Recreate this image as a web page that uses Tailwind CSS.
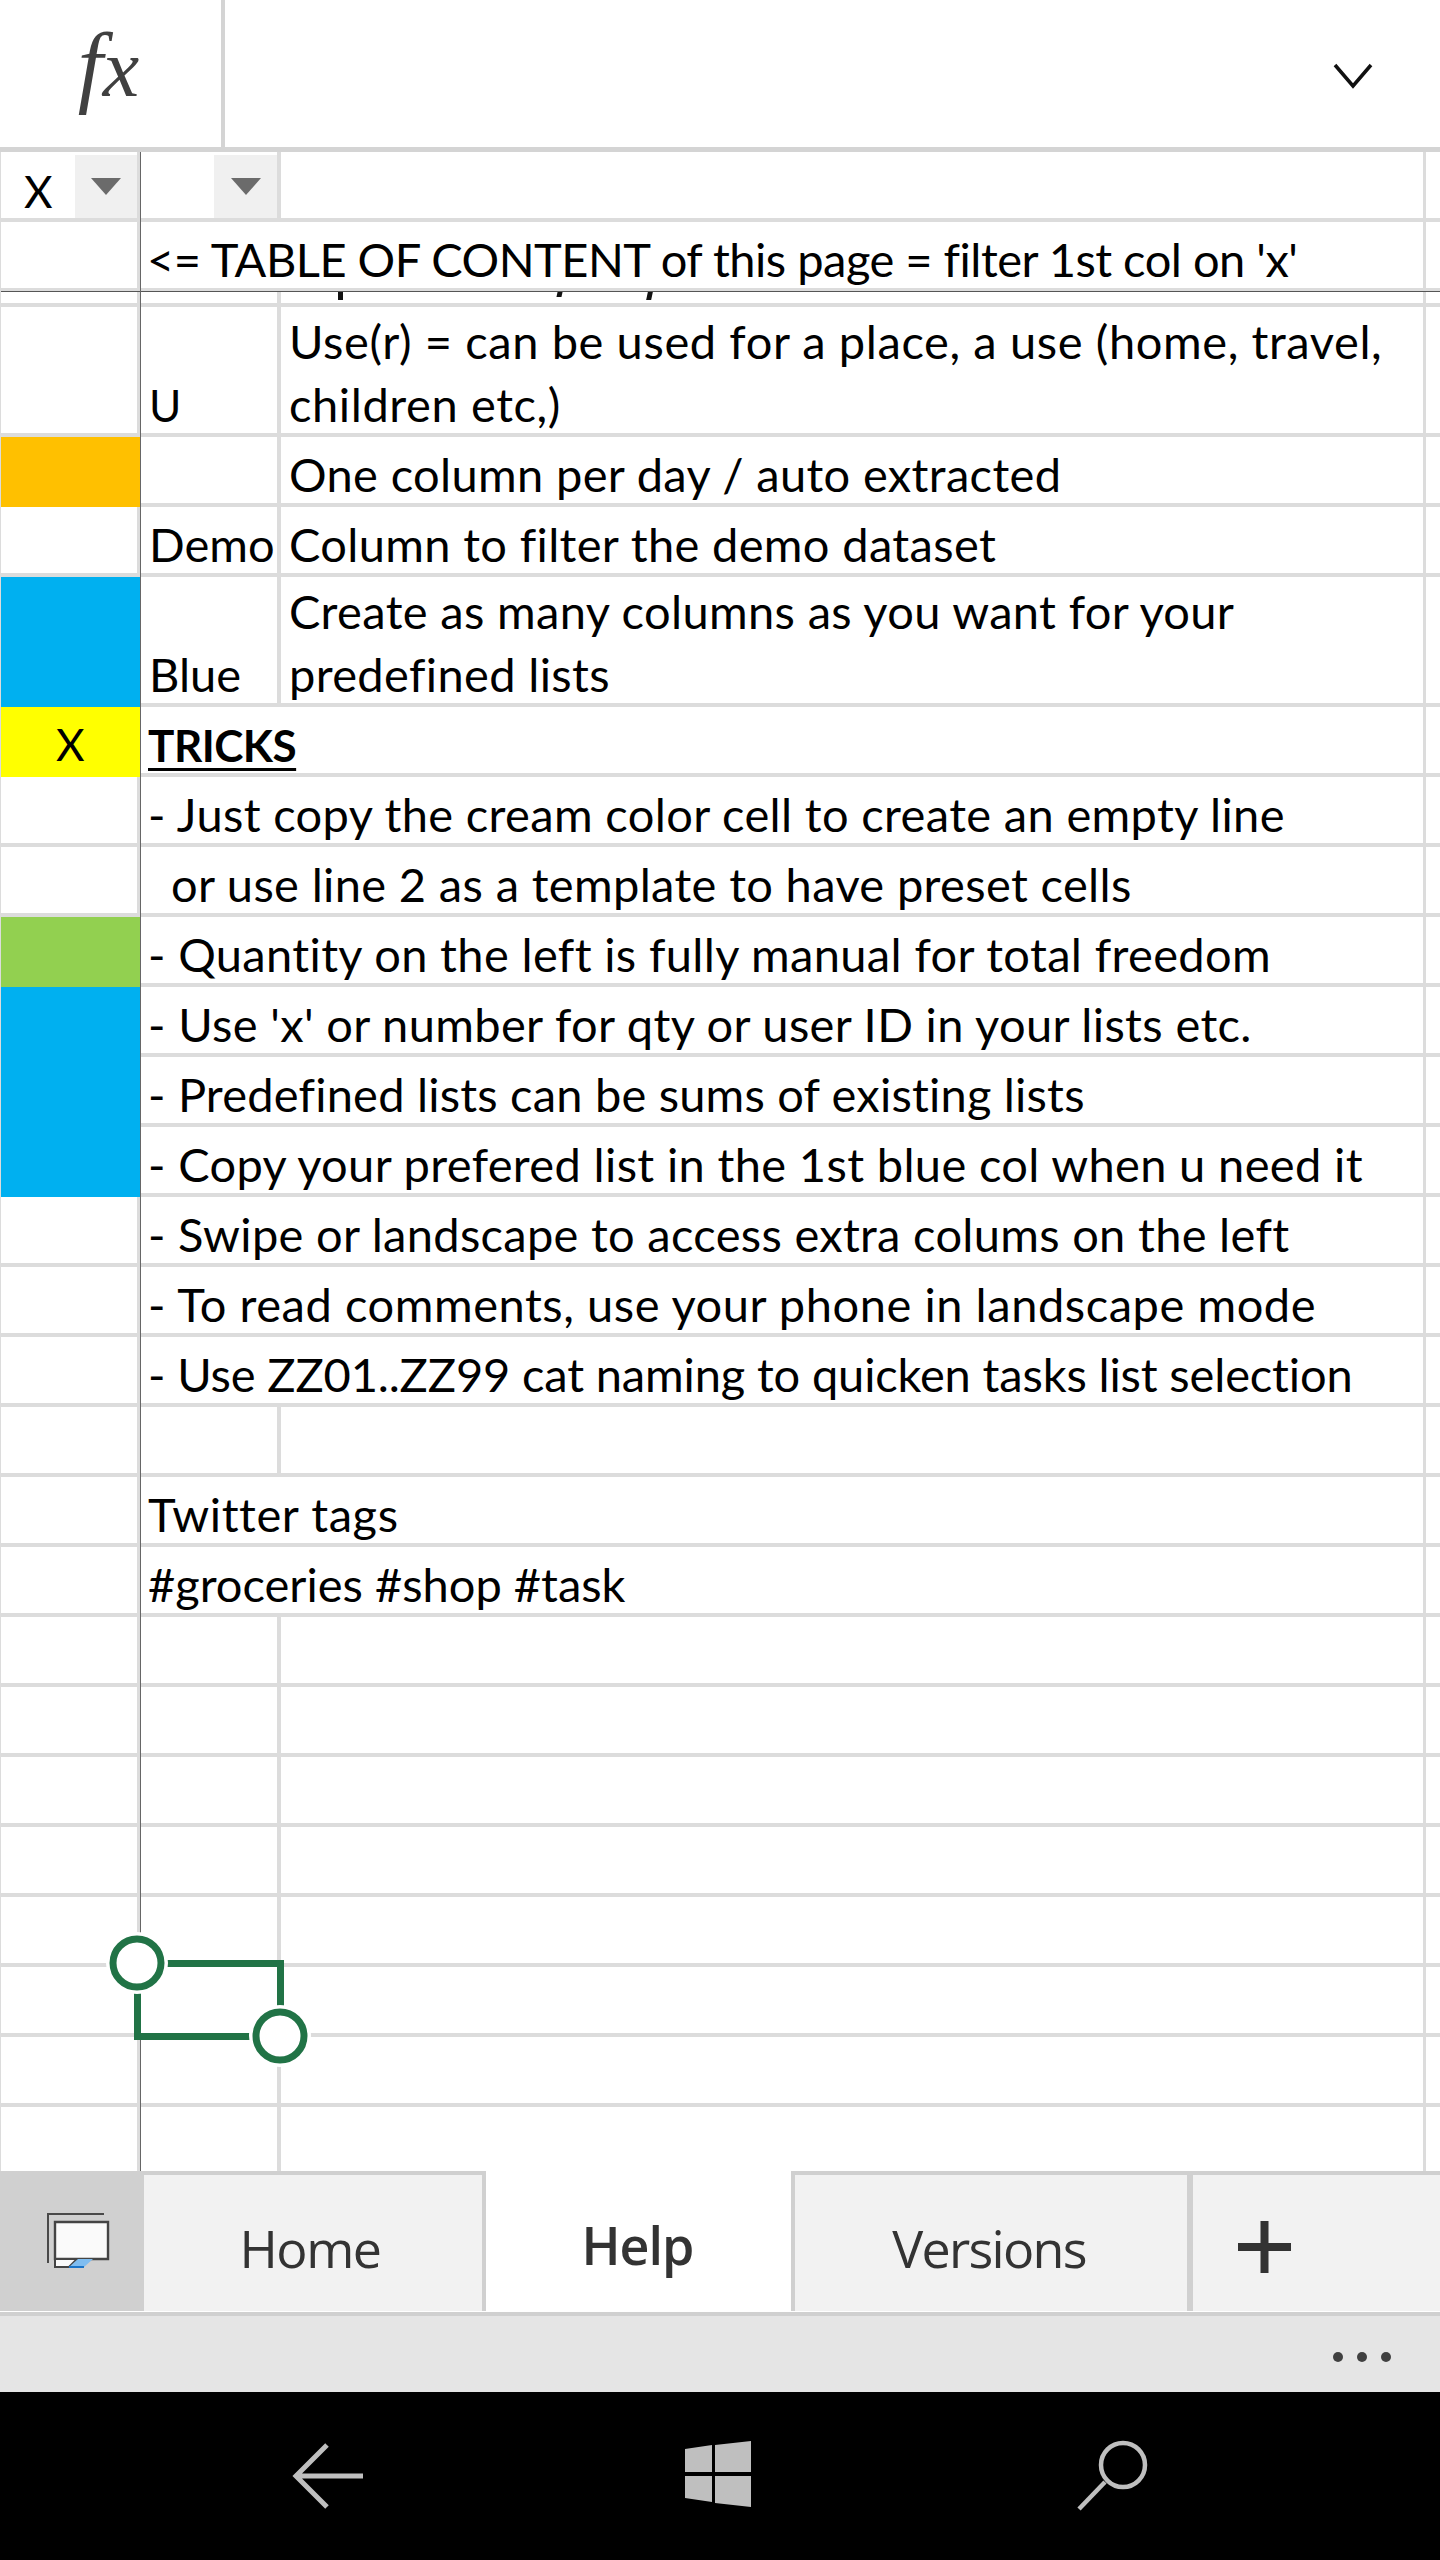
<!DOCTYPE html>
<html lang="en">
<head>
    <meta charset="UTF-8">
    <title>Excel Mobile - Help sheet</title>
    <script src="https://cdn.jsdelivr.net/npm/@tailwindcss/browser@4"></script>
</head>
<body class="bg-white">
<div class="relative w-[1440px] h-[2560px] overflow-hidden font-[Lato] text-[47px] leading-[63px] tracking-[0.35px] text-black whitespace-nowrap">

    <!-- formula bar -->
    <div class="flex h-[152px] border-b-[5px] border-[#d4d4d4]">
        <div class="w-[225px] border-r-4 border-[#d4d4d4] flex items-center justify-center pb-[16px] pr-[4px]">
            <p class="font-['Liberation_Serif'] italic text-[90px] leading-none tracking-normal text-[#404040]">f<span class="text-[82px]">x</span></p>
        </div>
        <div class="flex-1 flex justify-end pr-[67px] pt-[62px]">
            <svg class="w-[40px] h-[28px]" viewBox="0 0 40 28" fill="none" stroke="#111" stroke-width="3.5"><path d="M2 3l18 21L38 3"/></svg>
        </div>
    </div>

    <!-- sheet -->
    <div class="h-[2019px] overflow-hidden border-l border-[#dcdcdc]">
        <div class="flex h-[70px]">
            <div class="w-[139px] border-r-[3px] border-b-4 border-[#dcdcdc] flex items-start justify-between pt-[3px] pl-[23px]">
                <span class="text-[44px] mt-[5px]">X</span>
                <div class="w-[62px] h-[63px] bg-[#f0f0f0] flex items-center justify-center">
                    <svg class="w-[30px] h-[17px]" viewBox="0 0 30 17"><path d="M0 0h30L15 17z" fill="#6b6b6b"/></svg>
                </div>
            </div>
            <div class="w-[141px] border-r-4 border-b-4 border-[#dcdcdc] flex items-start justify-end pt-[3px]">
                <div class="w-[63px] h-[63px] bg-[#f0f0f0] flex items-center justify-center">
                    <svg class="w-[30px] h-[17px]" viewBox="0 0 30 17"><path d="M0 0h30L15 17z" fill="#6b6b6b"/></svg>
                </div>
            </div>
            <div class="w-[1145px] border-r-[3px] border-b-4 border-[#dcdcdc]"></div>
            <div class="flex-1 border-b-4 border-[#dcdcdc]"></div>
        </div>
        <div class="flex h-[69px]">
            <div class="w-[139px] border-r-[3px] border-b-[3px] border-[#dcdcdc]"></div>
            <div class="w-[1286px] pl-[7px] border-r-[3px] border-b-[3px] border-[#dcdcdc] flex items-end"><p class="-mb-[3px] tracking-[-0.5px]">&lt;= TABLE OF CONTENT of this page = filter 1st col on 'x'</p></div>
            <div class="flex-1 border-b-[3px] border-[#dcdcdc]"></div>
        </div>
        <div class="h-px bg-[#555555]"></div>
        <div class="flex h-[15px]">
            <div class="w-[139px] border-r-[3px] border-b-4 border-[#dcdcdc]"></div>
            <div class="w-[141px] border-r-4 border-b-4 border-[#dcdcdc]"></div>
            <div class="relative w-[1145px] border-r-[3px] border-b-4 border-[#dcdcdc]">
                <span class="absolute left-[57px] top-0 w-[5px] h-[8px] bg-[#111]"></span>
                <span class="absolute left-[276px] top-0 w-[5px] h-[5px] bg-[#111] -skew-x-12"></span>
                <span class="absolute left-[366px] top-0 w-[5px] h-[8px] bg-[#111] -skew-x-12"></span>
            </div>
            <div class="flex-1 border-b-4 border-[#dcdcdc]"></div>
        </div>
        <div class="flex h-[130px]">
            <div class="w-[139px] border-r-[3px] border-b-4 border-[#dcdcdc]"></div>
            <div class="w-[141px] pl-[9px] border-r-4 border-b-4 border-[#dcdcdc] flex items-end"><p class="-mb-[4px] text-[44px]">U</p></div>
            <div class="w-[1145px] pl-[8px] border-r-[3px] border-b-4 border-[#dcdcdc] flex items-end"><p class="-mb-[3px] tracking-[0.6px]">Use(r) = can be used for a place, a use (home, travel,<br>children etc,)</p></div>
            <div class="flex-1 border-b-4 border-[#dcdcdc]"></div>
        </div>
        <div class="flex h-[70px]">
            <div class="w-[139px] bg-[#ffc000]"></div>
            <div class="w-[141px] border-r-4 border-b-4 border-[#dcdcdc]"></div>
            <div class="w-[1145px] pl-[8px] border-r-[3px] border-b-4 border-[#dcdcdc] flex items-end"><p class="-mb-[3px]">One column per day / auto extracted</p></div>
            <div class="flex-1 border-b-4 border-[#dcdcdc]"></div>
        </div>
        <div class="flex h-[70px]">
            <div class="w-[139px] border-r-[3px] border-b-4 border-[#dcdcdc]"></div>
            <div class="w-[141px] pl-[9px] border-r-4 border-b-4 border-[#dcdcdc] flex items-end"><p class="-mb-[3px] tracking-normal">Demo</p></div>
            <div class="w-[1145px] pl-[8px] border-r-[3px] border-b-4 border-[#dcdcdc] flex items-end"><p class="-mb-[3px]">Column to filter the demo dataset</p></div>
            <div class="flex-1 border-b-4 border-[#dcdcdc]"></div>
        </div>
        <div class="flex h-[130px]">
            <div class="w-[139px] bg-[#00b0f0]"></div>
            <div class="w-[141px] pl-[9px] border-r-4 border-b-4 border-[#dcdcdc] flex items-end"><p class="-mb-[3px] tracking-normal">Blue</p></div>
            <div class="w-[1145px] pl-[8px] border-r-[3px] border-b-4 border-[#dcdcdc] flex items-end"><p class="-mb-[3px]">Create as many columns as you want for your<br>predefined lists</p></div>
            <div class="flex-1 border-b-4 border-[#dcdcdc]"></div>
        </div>
        <div class="flex h-[70px]">
            <div class="w-[139px] bg-[#ffff00] flex items-end justify-center"><p class="mb-px text-[44px]">X</p></div>
            <div class="w-[1286px] pl-[8px] border-r-[3px] border-b-4 border-[#dcdcdc] flex items-end"><p class="-mb-[4px] text-[44px] tracking-[-0.5px] font-bold underline decoration-[3px] underline-offset-[6px]">TRICKS</p></div>
            <div class="flex-1 border-b-4 border-[#dcdcdc]"></div>
        </div>
        <div class="flex h-[70px]">
            <div class="w-[139px] border-r-[3px] border-b-4 border-[#dcdcdc]"></div>
            <div class="w-[1286px] pl-[8px] border-r-[3px] border-b-4 border-[#dcdcdc] flex items-end"><p class="-mb-[3px]">- Just copy the cream color cell to create an empty line</p></div>
            <div class="flex-1 border-b-4 border-[#dcdcdc]"></div>
        </div>
        <div class="flex h-[70px]">
            <div class="w-[139px] border-r-[3px] border-b-4 border-[#dcdcdc]"></div>
            <div class="w-[1286px] pl-[31px] border-r-[3px] border-b-4 border-[#dcdcdc] flex items-end"><p class="-mb-[3px]">or use line 2 as a template to have preset cells</p></div>
            <div class="flex-1 border-b-4 border-[#dcdcdc]"></div>
        </div>
        <div class="flex h-[70px]">
            <div class="w-[139px] bg-[#92d050]"></div>
            <div class="w-[1286px] pl-[8px] border-r-[3px] border-b-4 border-[#dcdcdc] flex items-end"><p class="-mb-[3px]">- Quantity on the left is fully manual for total freedom</p></div>
            <div class="flex-1 border-b-4 border-[#dcdcdc]"></div>
        </div>
        <div class="flex h-[70px]">
            <div class="w-[139px] bg-[#00b0f0]"></div>
            <div class="w-[1286px] pl-[8px] border-r-[3px] border-b-4 border-[#dcdcdc] flex items-end"><p class="-mb-[3px]">- Use 'x' or number for qty or user ID in your lists etc.</p></div>
            <div class="flex-1 border-b-4 border-[#dcdcdc]"></div>
        </div>
        <div class="flex h-[70px]">
            <div class="w-[139px] bg-[#00b0f0]"></div>
            <div class="w-[1286px] pl-[8px] border-r-[3px] border-b-4 border-[#dcdcdc] flex items-end"><p class="-mb-[3px] tracking-[0.2px]">- Predefined lists can be sums of existing lists</p></div>
            <div class="flex-1 border-b-4 border-[#dcdcdc]"></div>
        </div>
        <div class="flex h-[70px]">
            <div class="w-[139px] bg-[#00b0f0]"></div>
            <div class="w-[1286px] pl-[8px] border-r-[3px] border-b-4 border-[#dcdcdc] flex items-end"><p class="-mb-[3px]">- Copy your prefered list in the 1st blue col when u need it</p></div>
            <div class="flex-1 border-b-4 border-[#dcdcdc]"></div>
        </div>
        <div class="flex h-[70px]">
            <div class="w-[139px] border-r-[3px] border-b-4 border-[#dcdcdc]"></div>
            <div class="w-[1286px] pl-[8px] border-r-[3px] border-b-4 border-[#dcdcdc] flex items-end"><p class="-mb-[3px] tracking-[0.3px]">- Swipe or landscape to access extra colums on the left</p></div>
            <div class="flex-1 border-b-4 border-[#dcdcdc]"></div>
        </div>
        <div class="flex h-[70px]">
            <div class="w-[139px] border-r-[3px] border-b-4 border-[#dcdcdc]"></div>
            <div class="w-[1286px] pl-[8px] border-r-[3px] border-b-4 border-[#dcdcdc] flex items-end"><p class="-mb-[3px] tracking-[0.55px]">- To read comments, use your phone in landscape mode</p></div>
            <div class="flex-1 border-b-4 border-[#dcdcdc]"></div>
        </div>
        <div class="flex h-[70px]">
            <div class="w-[139px] border-r-[3px] border-b-4 border-[#dcdcdc]"></div>
            <div class="w-[1286px] pl-[8px] border-r-[3px] border-b-4 border-[#dcdcdc] flex items-end"><p class="-mb-[3px] tracking-[-0.15px]">- Use ZZ01..ZZ99 cat naming to quicken tasks list selection</p></div>
            <div class="flex-1 border-b-4 border-[#dcdcdc]"></div>
        </div>
        <div class="flex h-[70px]">
            <div class="w-[139px] border-r-[3px] border-b-4 border-[#dcdcdc]"></div>
            <div class="w-[141px] border-r-4 border-b-4 border-[#dcdcdc]"></div>
            <div class="w-[1145px] border-r-[3px] border-b-4 border-[#dcdcdc]"></div>
            <div class="flex-1 border-b-4 border-[#dcdcdc]"></div>
        </div>
        <div class="flex h-[70px]">
            <div class="w-[139px] border-r-[3px] border-b-4 border-[#dcdcdc]"></div>
            <div class="w-[1286px] pl-[8px] border-r-[3px] border-b-4 border-[#dcdcdc] flex items-end"><p class="-mb-[3px] tracking-[0.6px]">Twitter tags</p></div>
            <div class="flex-1 border-b-4 border-[#dcdcdc]"></div>
        </div>
        <div class="flex h-[70px]">
            <div class="w-[139px] border-r-[3px] border-b-4 border-[#dcdcdc]"></div>
            <div class="w-[1286px] pl-[8px] border-r-[3px] border-b-4 border-[#dcdcdc] flex items-end"><p class="-mb-[3px] tracking-normal">#groceries #shop #task</p></div>
            <div class="flex-1 border-b-4 border-[#dcdcdc]"></div>
        </div>
        <div class="flex h-[70px]">
            <div class="w-[139px] border-r-[3px] border-b-4 border-[#dcdcdc]"></div>
            <div class="w-[141px] border-r-4 border-b-4 border-[#dcdcdc]"></div>
            <div class="w-[1145px] border-r-[3px] border-b-4 border-[#dcdcdc]"></div>
            <div class="flex-1 border-b-4 border-[#dcdcdc]"></div>
        </div>
        <div class="flex h-[70px]">
            <div class="w-[139px] border-r-[3px] border-b-4 border-[#dcdcdc]"></div>
            <div class="w-[141px] border-r-4 border-b-4 border-[#dcdcdc]"></div>
            <div class="w-[1145px] border-r-[3px] border-b-4 border-[#dcdcdc]"></div>
            <div class="flex-1 border-b-4 border-[#dcdcdc]"></div>
        </div>
        <div class="flex h-[70px]">
            <div class="w-[139px] border-r-[3px] border-b-4 border-[#dcdcdc]"></div>
            <div class="w-[141px] border-r-4 border-b-4 border-[#dcdcdc]"></div>
            <div class="w-[1145px] border-r-[3px] border-b-4 border-[#dcdcdc]"></div>
            <div class="flex-1 border-b-4 border-[#dcdcdc]"></div>
        </div>
        <div class="flex h-[70px]">
            <div class="w-[139px] border-r-[3px] border-b-4 border-[#dcdcdc]"></div>
            <div class="w-[141px] border-r-4 border-b-4 border-[#dcdcdc]"></div>
            <div class="w-[1145px] border-r-[3px] border-b-4 border-[#dcdcdc]"></div>
            <div class="flex-1 border-b-4 border-[#dcdcdc]"></div>
        </div>
        <div class="flex h-[70px]">
            <div class="w-[139px] border-r-[3px] border-b-4 border-[#dcdcdc]"></div>
            <div class="w-[141px] border-r-4 border-b-4 border-[#dcdcdc]"></div>
            <div class="w-[1145px] border-r-[3px] border-b-4 border-[#dcdcdc]"></div>
            <div class="flex-1 border-b-4 border-[#dcdcdc]"></div>
        </div>
        <div class="flex h-[70px]">
            <div class="w-[139px] border-r-[3px] border-b-4 border-[#dcdcdc]"></div>
            <div class="w-[141px] border-r-4 border-b-4 border-[#dcdcdc]"></div>
            <div class="w-[1145px] border-r-[3px] border-b-4 border-[#dcdcdc]"></div>
            <div class="flex-1 border-b-4 border-[#dcdcdc]"></div>
        </div>
        <div class="flex h-[70px]">
            <div class="w-[139px] border-r-[3px] border-b-4 border-[#dcdcdc]"></div>
            <div class="w-[141px] border-r-4 border-b-4 border-[#dcdcdc]"></div>
            <div class="w-[1145px] border-r-[3px] border-b-4 border-[#dcdcdc]"></div>
            <div class="flex-1 border-b-4 border-[#dcdcdc]"></div>
        </div>
        <div class="flex h-[70px]">
            <div class="w-[139px] border-r-[3px] border-[#dcdcdc]"></div>
            <div class="w-[141px] border-r-4 border-[#dcdcdc]"></div>
            <div class="w-[1145px] border-r-[3px] border-[#dcdcdc]"></div>
            <div class="flex-1"></div>
        </div>
    </div>

    <!-- freeze pane line and selection handles lie over the sheet -->
    <div class="absolute left-[140px] top-[152px] w-px h-[2019px] bg-[#666666]"></div>
    <svg class="absolute left-[100px] top-[1925px] w-[220px] h-[150px]" viewBox="100 1925 220 150" fill="none">
        <path d="M137 1963.500H280.500V2036.500H137.500V1963" stroke="#217346" stroke-width="7"/>
        <circle cx="137" cy="1963" r="31" fill="#fff"/>
        <circle cx="280" cy="2036" r="31" fill="#fff"/>
        <circle cx="137" cy="1963" r="24" stroke="#217346" stroke-width="7"/>
        <circle cx="280" cy="2036" r="24" stroke="#217346" stroke-width="7"/>
    </svg>

    <!-- sheet tabs -->
    <div class="flex h-[141px] pb-px bg-white font-['Open_Sans'] text-[52px] leading-none text-[#333333] tracking-[-1.7px]">
        <div class="w-[144px] bg-[#d0d0d0] pl-[44px] pt-[39px]">
            <svg class="w-[70px] h-[62px]" viewBox="44 2210 70 62" fill="none">
                <path d="M48 2263V2214H104" stroke="#4a4a4a" stroke-width="2"/>
                <path d="M55 2222H108V2259H55z" fill="#fafafa" stroke="#444" stroke-width="2.400"/>
                <path d="M55 2259V2267H69L77 2259z" fill="#fafafa" stroke="#444" stroke-width="2"/>
                <path d="M78 2259H93L84 2267H69z" fill="#7fbdf0"/>
                <path d="M69 2267H84" stroke="#1a74c8" stroke-width="2"/>
            </svg>
        </div>
        <div class="w-[342px] bg-[#f2f2f2] border-t-4 border-r-4 border-[#d0d0d0] flex items-center justify-center pt-[10px] pr-[6px] tracking-[-1.5px]">Home</div>
        <div class="w-[305px] flex items-center justify-center pt-[8px] pr-[2px] font-semibold tracking-[-1px]">Help</div>
        <div class="w-[402px] bg-[#f2f2f2] border-t-4 border-l-4 border-r-[6px] border-[#d0d0d0] flex items-center justify-center pt-[10px] pr-[4px]">Versions</div>
        <div class="flex-1 bg-[#f2f2f2] border-t-4 border-[#d0d0d0] pl-[45px] pt-[46px]">
            <svg class="w-[53px] h-[52px]" viewBox="0 0 53 52"><path d="M22.500 0h8v22h22.500v8h-22.500v22h-8v-22H0v-8h22.500z" fill="#333"/></svg>
        </div>
    </div>

    <!-- app bar -->
    <div class="h-[80px] bg-[#e5e5e5] border-t-4 border-[#d0d0d0] flex items-center justify-end gap-[14px] pr-[49px] pt-[5px]">
        <span class="w-[10px] h-[10px] rounded-full bg-[#404040]"></span>
        <span class="w-[10px] h-[10px] rounded-full bg-[#404040]"></span>
        <span class="w-[10px] h-[10px] rounded-full bg-[#404040]"></span>
    </div>

    <!-- phone nav bar -->
    <div class="h-[168px] bg-black flex items-center pl-[292px]">
        <svg class="w-[74px] h-[66px]" viewBox="292 2443 74 66" fill="none" stroke="#bfbfbf" stroke-width="5"><path d="M327 2445L296 2476L327 2507M296 2476H363"/></svg>
        <svg class="ml-[319px] w-[66px] h-[74px]" viewBox="685 2439 66 74" fill="#bfbfbf">
            <path d="M685 2449l27-4v27h-27zM685 2476h27v26l-27-4zM715 2445l36-4v31h-36zM715 2476h36v31l-36-4z"/>
        </svg>
        <svg class="ml-[323px] w-[76px] h-[72px]" viewBox="1074 2440 76 72" fill="none" stroke="#bfbfbf" stroke-width="4.500">
            <circle cx="1123" cy="2465" r="22"/>
            <path d="M1105 2482L1079 2509"/>
        </svg>
    </div>
</div>
</body>
</html>
